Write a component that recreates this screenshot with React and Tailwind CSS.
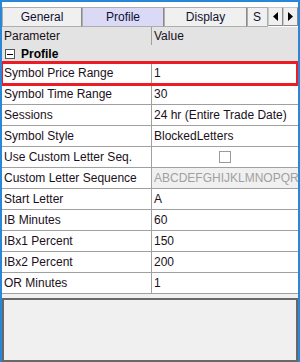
import React from 'react';

const rows = [
  { label: 'Symbol Price Range', value: '1' },
  { label: 'Symbol Time Range', value: '30' },
  { label: 'Sessions', value: '24 hr (Entire Trade Date)' },
  { label: 'Symbol Style', value: 'BlockedLetters' },
  { label: 'Use Custom Letter Seq.', check: true },
  { label: 'Custom Letter Sequence', value: 'ABCDEFGHIJKLMNOPQRSTUVWXYZ', disabled: true },
  { label: 'Start Letter', value: 'A' },
  { label: 'IB Minutes', value: '60' },
  { label: 'IBx1 Percent', value: '150' },
  { label: 'IBx2 Percent', value: '200' },
  { label: 'OR Minutes', value: '1' },
];

function Tab({ label, width, selected }) {
  return (
    <div
      className={`h-[20px] flex items-center justify-center border border-[#adadad] border-r-[#8a8a8a] text-[#101030] overflow-hidden whitespace-nowrap ${selected ? 'bg-[#dadaf6]' : 'bg-[#f0f0f0]'} ${width}`}
    >
      {label}
    </div>
  );
}

function Arrow({ dir }) {
  return (
    <div className="w-[15px] h-[19px] flex items-center justify-center bg-[#f0f0f0] border border-[#c8c8c8] border-r-[#8a8a8a] border-b-[#8a8a8a]">
      <svg width="5" height="9" viewBox="0 0 5 9">
        {dir === 'left' ? <polygon points="5,0 5,9 0,4.5" fill="#000" /> : <polygon points="0,0 0,9 5,4.5" fill="#000" />}
      </svg>
    </div>
  );
}

export default function App() {
  return (
    <div className="relative w-[300px] h-[362px] bg-white border-t-2 border-x-2 border-[#2a87d8] font-['Liberation_Sans',Arial,sans-serif] text-[12px] text-[#1a1020] overflow-hidden">
      {/* tabs */}
      <div className="pt-[5px] flex items-start">
        <Tab label="General" width="w-[80px]" />
        <Tab label="Profile" width="w-[82px]" selected />
        <Tab label="Display" width="w-[83px]" />
        <div className="h-[20px] w-[21px] border border-[#adadad] bg-[#f0f0f0] pl-[5px] text-[#101030] overflow-hidden">
          <span className="leading-[18px]">S</span>
        </div>
        <Arrow dir="left" />
        <Arrow dir="right" />
      </div>

      {/* grid */}
      <div className="bg-[#f0f0f0]">
        <div className="h-[18px] flex bg-[#e3e3e3]">
          <div className="w-[150px] pl-[2px] flex items-center border-r border-[#a0a0a0]">Parameter</div>
          <div className="flex-1 pl-[2px] flex items-center">Value</div>
        </div>
        <div className="h-[18px] flex items-center bg-[#e3e3e3] pl-[3px] gap-[6px]">
          <div className="w-[10px] h-[10px] border border-[#555] bg-white flex items-center justify-center">
            <div className="w-[6px] h-px bg-black" />
          </div>
          <span className="font-bold text-black">Profile</span>
        </div>
        {rows.map((r) => (
          <div key={r.label} className="h-[21px] flex border-b border-[#a0a0a0] bg-white">
            <div className="w-[150px] pl-[2px] flex items-center border-r border-[#a0a0a0] whitespace-nowrap overflow-hidden">{r.label}</div>
            {r.check ? (
              <div className="flex-1 flex items-center justify-center">
                <div className="w-[12px] h-[12px] border border-[#9a9a9a] bg-white" />
              </div>
            ) : (
              <div className={`flex-1 pl-[2px] flex items-center whitespace-nowrap overflow-hidden ${r.disabled ? 'bg-[#f0f0f0] text-[#a0a0a0]' : ''}`}>
                {r.value}
              </div>
            )}
          </div>
        ))}
        <div className="h-[4px]" />
        <div className="h-[64px] border-2 border-[#686868] bg-[#f0f0f0]" />
      </div>

      {/* highlight */}
      <div className="absolute left-[-2px] top-[59px] w-[299px] h-[25px] border-[3px] border-[#ec1c24]" />
    </div>
  );
}
